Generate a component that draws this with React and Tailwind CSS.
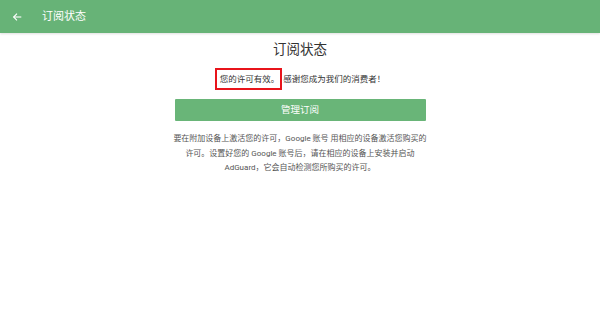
import React from "react";

function ArrowLeft() {
  return (
    <svg width="10" height="10" viewBox="0 0 24 24" fill="none" stroke="white" strokeWidth="2.6" strokeLinecap="square">
      <path d="M21 12H5" />
      <path d="M11 5l-7 7 7 7" />
    </svg>
  );
}

export default function App() {
  return (
    <div
      className="w-[600px] h-[320px] bg-white overflow-hidden"
      style={{ fontFamily: 'Roboto, "Noto Sans CJK SC", "Noto Sans", sans-serif' }}
    >
      {/* Header */}
      <div className="h-[33px] bg-[#67b377] flex items-center shadow-[0_1px_2px_rgba(0,0,0,0.12)]">
        <div className="w-[42px] flex pl-[12px]">
          <ArrowLeft />
        </div>
        <span className="text-white text-[11px] leading-none">订阅状态</span>
      </div>

      <div className="flex flex-col items-center">
        <h1 className="mt-[1px] text-[13.5px] leading-[30px] text-[#333]">订阅状态</h1>
        <p className="mt-[4px] text-[8.5px] leading-[22px] text-[#333] flex items-center">
          <span className="border-2 border-[#e8141b] pl-[3px] pr-[1px] leading-[18px]">您的许可有效。</span>
          <span className="ml-[1px]">感谢您成为我们的消费者！</span>
        </p>
        <button className="mt-[9px] w-[251px] h-[22px] bg-[#69b578] text-white text-[9.5px] leading-none rounded-[1px]">
          管理订阅
        </button>
        <p className="mt-[11px] text-center text-[8px] leading-[14.5px] text-[#555] whitespace-nowrap">
          要在附加设备上激活您的许可，Google 账号 用相应的设备激活您购买的
          <br />
          许可。设置好您的 Google 账号后，请在相应的设备上安装并启动
          <br />
          AdGuard，它会自动检测您所购买的许可。
        </p>
      </div>
    </div>
  );
}
